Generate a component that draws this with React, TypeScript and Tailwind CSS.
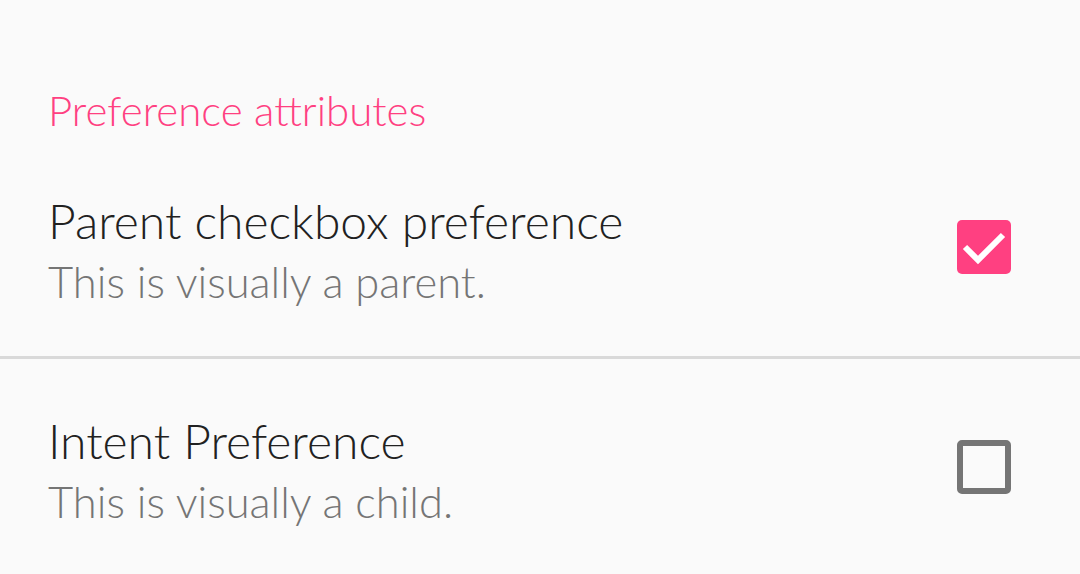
import React from "react";

function Check({ checked }: { checked: boolean }) {
  if (checked) {
    return (
      <div className="w-[54px] h-[54px] rounded-[5px] bg-[#ff4081] shrink-0">
        <svg width="54" height="54" viewBox="0 0 54 54">
          <path d="M8 27 L21 40 L46 15" fill="none" stroke="white" strokeWidth="6" />
        </svg>
      </div>
    );
  }
  return <div className="w-[54px] h-[54px] rounded-[5px] border-[6px] border-[#757575] shrink-0" />;
}

function Row({
  title,
  summary,
  checked,
  pad,
}: {
  title: string;
  summary: string;
  checked: boolean;
  pad: string;
}) {
  return (
    <div className={`flex items-start justify-between pl-[48px] pr-[69px] ${pad}`}>
      <div className="flex flex-col">
        <span className="text-[48px] leading-[58px] text-[#212121] font-light">{title}</span>
        <span className="mt-[2px] text-[43.5px] leading-[58px] text-[#757575] font-light">{summary}</span>
      </div>
      <div className="mt-[28px]">
        <Check checked={checked} />
      </div>
    </div>
  );
}

export default function App() {
  return (
    <div
      className="w-[1080px] h-[574px] bg-[#fafafa] overflow-hidden"
      style={{ fontFamily: "Lato, 'Noto Sans', sans-serif" }}
    >
      <div className="pt-[84px] pl-[48px] h-[158px]">
        <span className="text-[42px] leading-[52px] text-[#ff4081] font-light">Preference attributes</span>
      </div>
      <Row
        title="Parent checkbox preference"
        summary="This is visually a parent."
        checked={true}
        pad="pt-[34px] h-[198px]"
      />
      <div className="h-[3px] bg-[#d9d9d9]" />
      <Row
        title="Intent Preference"
        summary="This is visually a child."
        checked={false}
        pad="pt-[53px]"
      />
    </div>
  );
}
